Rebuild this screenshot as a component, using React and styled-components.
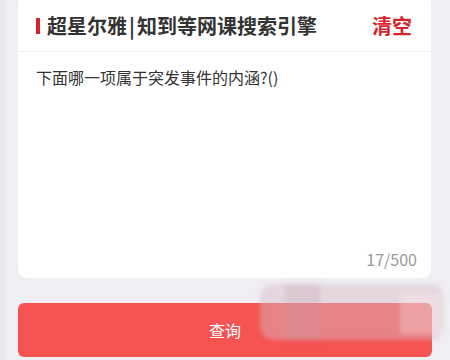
import React from "react"
import styled, { createGlobalStyle } from "styled-components"

const GlobalStyle = createGlobalStyle`
  html, body {
    margin: 0;
    padding: 0;
    background: #efeef3;
    font-family: "Noto Sans CJK SC", "Noto Sans", sans-serif;
  }
  * { box-sizing: border-box; }
`

const Page = styled.div`
  position: relative;
  width: 450px;
  height: 360px;
  overflow: hidden;
  padding: 0 19px 0 13px;
  border-left: 5px solid #e8e7ed;
`

const Card = styled.div`
  margin-top: -4px;
  background: #fff;
  border-radius: 8px;
  height: 282px;
  display: flex;
  flex-direction: column;
`

const Header = styled.div`
  height: 56px;
  padding: 4px 19px 0 18px;
  display: flex;
  align-items: center;
  justify-content: space-between;
  border-bottom: 1px solid #efefef;
`

const Title = styled.div`
  display: flex;
  align-items: center;
  font-size: 20px;
  font-weight: 700;
  color: #333;

  &::before {
    content: "";
    width: 4px;
    height: 16px;
    background: #d8232a;
    margin-right: 7px;
  }
`

const Pipe = styled.span`
  margin: 0 2px;
`

const Clear = styled.span`
  font-size: 20px;
  font-weight: 700;
  color: #d8232a;
`

const Body = styled.div`
  flex: 1;
  display: flex;
  flex-direction: column;
  padding: 12px 14px 8px 18px;
`

const Question = styled.textarea`
  flex: 1;
  border: none;
  outline: none;
  resize: none;
  padding: 0;
  font-family: inherit;
  font-size: 16px;
  line-height: 26px;
  color: #333;
  background: transparent;
`

const Counter = styled.div`
  align-self: flex-end;
  font-size: 16px;
  color: #999;
  line-height: 22px;
`

const Submit = styled.button`
  display: block;
  width: 414px;
  height: 54px;
  margin-top: 25px;
  border: none;
  border-radius: 6px;
  background: #f55252;
  color: #fff;
  font-family: inherit;
  font-size: 16px;
  padding: 0;
`

const Blur = styled.div`
  position: absolute;
  left: 255px;
  top: 284px;
  width: 184px;
  height: 56px;
  border-radius: 14px;
  background: rgba(214, 188, 198, 0.45);
  filter: blur(2px);
`

const BlurPatch = styled.div`
  position: absolute;
  left: ${p => p.x}px;
  top: ${p => p.y}px;
  width: ${p => p.w}px;
  height: ${p => p.h}px;
  background: ${p => p.c};
`

export default function App() {
  return (
    <Page>
      <GlobalStyle />
      <Card>
        <Header>
          <Title>
            超星尔雅<Pipe>|</Pipe>知到等网课搜索引擎
          </Title>
          <Clear>清空</Clear>
        </Header>
        <Body>
          <Question defaultValue="下面哪一项属于突发事件的内涵?()" />
          <Counter>17/500</Counter>
        </Body>
      </Card>
      <Submit>查询</Submit>
      <Blur>
        <BlurPatch x={25} y={0} w={35} h={56} c="rgba(190,160,170,0.25)" />
        <BlurPatch x={140} y={10} w={44} h={40} c="rgba(255,235,240,0.3)" />
      </Blur>
    </Page>
  )
}
